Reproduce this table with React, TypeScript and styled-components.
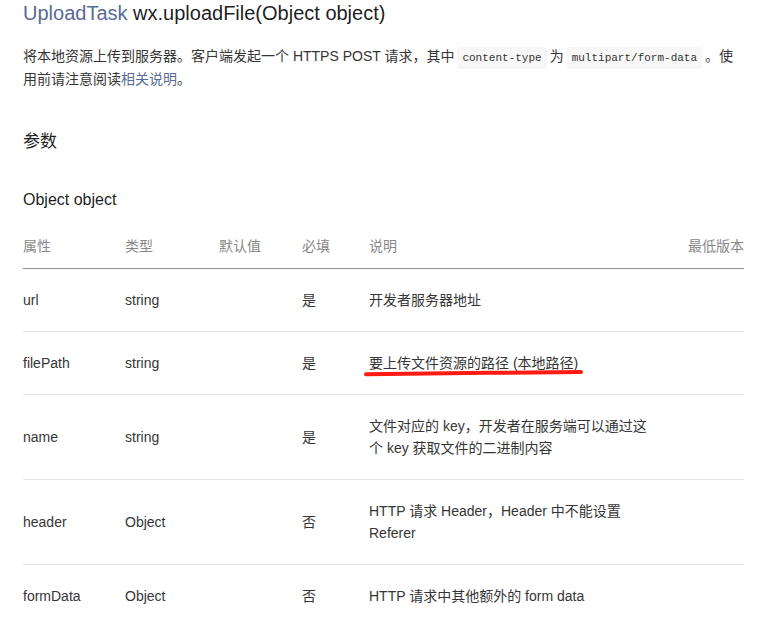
import React from "react";
import styled, { createGlobalStyle } from "styled-components";

const Global = createGlobalStyle`
  html, body { margin: 0; padding: 0; background: #fff; }
  body {
    font-family: "Liberation Sans", Arial, "Noto Sans CJK SC", sans-serif;
    color: #333;
    -webkit-font-smoothing: antialiased;
  }
`;

const Page = styled.div`
  padding: 0 32px 0 23px;
  width: 721px;
`;

const Title = styled.h1`
  margin: 0;
  font-size: 20px;
  line-height: 27px;
  font-weight: 400;
  color: rgba(0, 0, 0, 0.9);
`;

const Link = styled.span`
  color: #576b95;
`;

const Para = styled.p`
  margin: 18px 0 0;
  font-size: 14px;
  line-height: 23px;
  color: #353535;
`;

const Code = styled.code`
  font-family: "Liberation Mono", "DejaVu Sans Mono", monospace;
  font-size: 11px;
  line-height: 1;
  background: #f7f7f7;
  border-radius: 3px;
  padding: 5px 5px;
  margin: 0 3px;
  color: #333;
`;

const H2 = styled.h2`
  margin: 39px 0 0;
  font-size: 17px;
  line-height: 24px;
  font-weight: 400;
  color: rgba(0, 0, 0, 0.9);
`;

const H3 = styled.h3`
  margin: 35px 0 0;
  font-size: 16px;
  line-height: 22px;
  font-weight: 400;
  color: rgba(0, 0, 0, 0.9);
`;

const Table = styled.table`
  margin-top: 13px;
  width: 721px;
  table-layout: fixed;
  border-collapse: collapse;
  font-size: 14px;
  line-height: 22px;
`;

const Th = styled.th<{ $right?: boolean }>`
  padding: 11px 0;
  text-align: ${(p) => (p.$right ? "right" : "left")};
  font-weight: 400;
  color: #888;
  border-bottom: 1px solid #8c8c8c;
`;

const Td = styled.td`
  padding: 20px 10px 20px 0;
  vertical-align: middle;
  color: #353535;
  border-bottom: 1px solid #e5e5e5;
`;

const Row = styled.tr`
  &:last-child td {
    border-bottom: none;
  }
`;

const Marked = styled.span`
  position: relative;
  display: inline-block;
`;

const Underline = styled.svg`
  position: absolute;
  left: -5px;
  top: 17px;
  width: 220px;
  height: 8px;
  overflow: visible;
  pointer-events: none;
`;

type RowData = {
  name: string;
  type: string;
  req: string;
  desc: React.ReactNode;
};

const rows: RowData[] = [
  { name: "url", type: "string", req: "是", desc: "开发者服务器地址" },
  {
    name: "filePath",
    type: "string",
    req: "是",
    desc: (
      <Marked>
        要上传文件资源的路径 (本地路径)
        <Underline viewBox="0 0 220 8">
          <path
            d="M2 5.2 C 60 4.4, 150 3.6, 217 3"
            stroke="#ff1a12"
            strokeWidth="4"
            strokeLinecap="round"
            fill="none"
          />
        </Underline>
      </Marked>
    ),
  },
  {
    name: "name",
    type: "string",
    req: "是",
    desc: "文件对应的 key，开发者在服务端可以通过这个 key 获取文件的二进制内容",
  },
  {
    name: "header",
    type: "Object",
    req: "否",
    desc: "HTTP 请求 Header，Header 中不能设置 Referer",
  },
  {
    name: "formData",
    type: "Object",
    req: "否",
    desc: "HTTP 请求中其他额外的 form data",
  },
];

export default function App() {
  return (
    <>
      <Global />
      <Page>
        <Title>
          <Link>UploadTask</Link> wx.uploadFile(Object object)
        </Title>
        <Para>
          将本地资源上传到服务器。客户端发起一个 HTTPS POST 请求，其中
          <Code>content-type</Code>为<Code>multipart/form-data</Code>。使用前请注意阅读
          <Link>相关说明</Link>。
        </Para>
        <H2>参数</H2>
        <H3>Object object</H3>
        <Table>
          <colgroup>
            <col style={{ width: 102 }} />
            <col style={{ width: 94 }} />
            <col style={{ width: 83 }} />
            <col style={{ width: 67 }} />
            <col style={{ width: 298 }} />
            <col style={{ width: 77 }} />
          </colgroup>
          <thead>
            <tr>
              <Th>属性</Th>
              <Th>类型</Th>
              <Th>默认值</Th>
              <Th>必填</Th>
              <Th>说明</Th>
              <Th $right>最低版本</Th>
            </tr>
          </thead>
          <tbody>
            {rows.map((r) => (
              <Row key={r.name}>
                <Td>{r.name}</Td>
                <Td>{r.type}</Td>
                <Td></Td>
                <Td>{r.req}</Td>
                <Td>{r.desc}</Td>
                <Td></Td>
              </Row>
            ))}
          </tbody>
        </Table>
      </Page>
    </>
  );
}
